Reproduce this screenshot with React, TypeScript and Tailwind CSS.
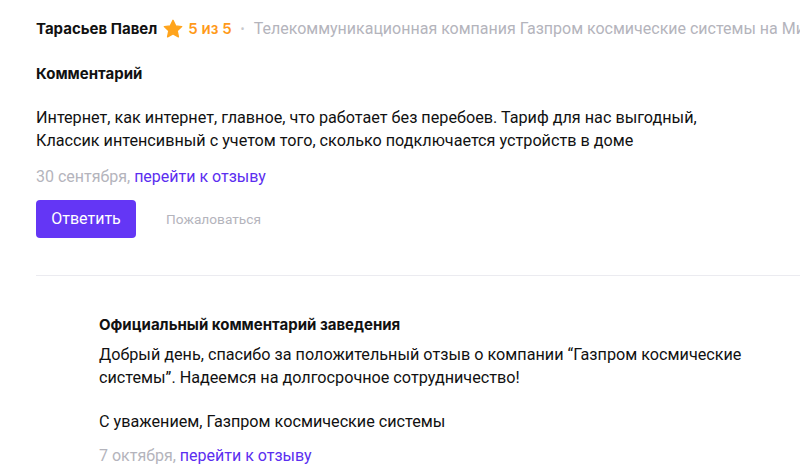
import React from "react";

export default function App() {
  return (
    <div className="w-[800px] h-[467px] overflow-hidden bg-white font-['Roboto',sans-serif] text-[#1a1a1a]">
      <div className="pl-[36px]">
        <div className="flex items-center whitespace-nowrap pt-[19px] h-[39px]">
          <span className="shrink-0 font-['Inter',sans-serif] font-bold text-[15px] text-[#111]">Тарасьев Павел</span>
          <svg className="shrink-0 ml-[5px]" width="22" height="22" viewBox="0 0 24 24">
            <path fill="#ffa41c" stroke="#ffa41c" strokeWidth="1.5" strokeLinejoin="round" d="M12 2.5l2.9 6.1 6.6.8-4.9 4.6 1.3 6.6L12 17.3l-5.9 3.3 1.3-6.6-4.9-4.6 6.6-.8z" />
          </svg>
          <span className="shrink-0 ml-[4px] font-['Inter',sans-serif] font-semibold text-[15px] text-[#ff9a1a]">5 из 5</span>
          <span className="shrink-0 ml-[9px] text-[#c8c8cc] text-[12px]">•</span>
          <span className="shrink-0 ml-[9px] text-[16px] text-[#b4b4bc]">Телекоммуникационная компания Газпром космические системы на Мира</span>
        </div>
        <div className="mt-[25px] font-['Inter',sans-serif] font-bold text-[15px] text-[#111] leading-[20px]">Комментарий</div>
        <div className="mt-[22px] text-[16.2px] leading-[23px] text-[#111]">
          Интернет, как интернет, главное, что работает без перебоев. Тариф для нас выгодный,<br />
          Классик интенсивный с учетом того, сколько подключается устройств в доме
        </div>
        <div className="mt-[14px] text-[16px] leading-[22px]">
          <span className="text-[#b4b4bc]">30 сентября, </span>
          <a className="text-[#5b2ef0]">перейти к отзыву</a>
        </div>
        <div className="mt-[12px] flex items-center">
          <button className="w-[100px] h-[38px] rounded-[4px] bg-[#6436f5] text-white text-[16px]">Ответить</button>
          <span className="ml-[30px] text-[13.7px] text-[#b4b4bc]">Пожаловаться</span>
        </div>
        <div className="mt-[37px] h-px bg-[#ebebf0]"></div>
        <div className="pl-[63px] pt-[39px]">
          <div className="font-['Inter',sans-serif] font-bold text-[15px] leading-[20px] text-[#111]">Официальный комментарий заведения</div>
          <div className="mt-[8px] text-[16.2px] leading-[23px] text-[#111]">
            Добрый день, спасибо за положительный отзыв о компании “Газпром космические<br />
            системы”. Надеемся на долгосрочное сотрудничество!
          </div>
          <div className="mt-[21px] text-[16.2px] leading-[23px] text-[#111]">С уважением, Газпром космические системы</div>
          <div className="mt-[12px] text-[16px] leading-[22px]">
            <span className="text-[#b4b4bc]">7 октября, </span>
            <a className="text-[#5b2ef0]">перейти к отзыву</a>
          </div>
        </div>
      </div>
    </div>
  );
}
